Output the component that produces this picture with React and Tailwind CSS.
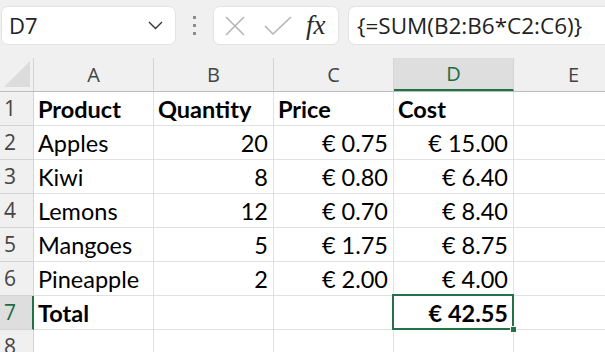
import React from "react";

const cellFont = { fontFamily: "Lato, 'Open Sans', sans-serif" };
const uiFont = { fontFamily: "'Open Sans', 'Noto Sans', sans-serif" };

const rows = [
  ["Product", "Quantity", "Price", "Cost"],
  ["Apples", "20", "€ 0.75", "€ 15.00"],
  ["Kiwi", "8", "€ 0.80", "€ 6.40"],
  ["Lemons", "12", "€ 0.70", "€ 8.40"],
  ["Mangoes", "5", "€ 1.75", "€ 8.75"],
  ["Pineapple", "2", "€ 2.00", "€ 4.00"],
  ["Total", "", "", "€ 42.55"],
  ["", "", "", ""],
];

const cols = ["A", "B", "C", "D", "E"];

function Toolbar() {
  return (
    <div className="flex h-[58px] items-start gap-0 bg-[#f0f0f0] pt-[6px]" style={uiFont}>
      {/* name box */}
      <div className="ml-px flex h-[39px] w-[175px] items-center justify-between rounded-[7px] border border-[#e3e3e3] bg-white pl-[7px] pr-[12px]">
        <span className="text-[22px] text-[#222]">D7</span>
        <svg width="15" height="9" viewBox="0 0 15 9" fill="none">
          <path d="M1 1l6.5 6.5L14 1" stroke="#333" strokeWidth="1.4" />
        </svg>
      </div>
      {/* dots */}
      <div className="ml-[17px] mt-[10px] flex w-[4px] flex-col gap-[5px]">
        <span className="h-[3px] w-[3px] bg-[#8c8c8c]" />
        <span className="h-[3px] w-[3px] bg-[#8c8c8c]" />
        <span className="h-[3px] w-[3px] bg-[#8c8c8c]" />
      </div>
      {/* cancel / enter / fx */}
      <div className="ml-[16px] flex h-[39px] w-[126px] items-center rounded-[7px] border border-[#e3e3e3] bg-white pl-[10px]">
        <svg width="22" height="22" viewBox="0 0 22 22" fill="none">
          <path d="M2 2l18 18M20 2L2 20" stroke="#b4b4b4" strokeWidth="1.6" />
        </svg>
        <svg className="ml-[18px]" width="28" height="20" viewBox="0 0 28 20" fill="none">
          <path d="M1 10l8 8L27 1" stroke="#b4b4b4" strokeWidth="1.6" />
        </svg>
        <span
          className="ml-[14px] text-[27px] italic leading-none text-[#2a2a2a]"
          style={{ fontFamily: "'Liberation Serif', 'DejaVu Serif', serif" }}
        >
          fx
        </span>
      </div>
      {/* formula */}
      <div className="ml-[9px] flex h-[39px] flex-1 items-center rounded-l-[7px] border border-r-0 border-[#e3e3e3] bg-white pl-[8px]">
        <span className="whitespace-nowrap text-[22.5px] text-[#222]">{"{=SUM(B2:B6*C2:C6)}"}</span>
      </div>
    </div>
  );
}

export default function App() {
  return (
    <div className="h-[352px] w-[605px] overflow-hidden bg-white">
      <Toolbar />
      {/* column header row */}
      <div className="flex h-[34px] border-b border-[#bdbdbd] bg-[#f0f0f0]" style={uiFont}>
        <div className="flex w-[34px] shrink-0 items-end justify-end border-r border-[#d4d4d4] pb-[4px] pr-[3px]">
          <svg width="26" height="26" viewBox="0 0 26 26">
            <path d="M26 0V26H0Z" fill="#dcdcdc" />
          </svg>
        </div>
        {cols.map((c) => (
          <div
            key={c}
            className={`flex w-[120px] shrink-0 items-center justify-center border-r text-[20px] ${
              c === "D"
                ? "border-[#d4d4d4] border-b-2 border-b-[#217346] bg-[#dedede] text-[#1e6b41]"
                : "border-[#d4d4d4] text-[#444]"
            }`}
          >
            {c}
          </div>
        ))}
      </div>
      {rows.map((r, i) => (
        <div key={i} className="flex h-[34px]">
          <div
            className={`flex w-[34px] shrink-0 items-center border-b pl-[4px] text-[21px] ${
              i === 6
                ? "border-r-2 border-b-[#d4d4d4] border-r-[#217346] bg-[#dedede] text-[#1e6b41]"
                : "border-r border-[#d4d4d4] bg-[#f0f0f0] text-[#444]"
            }`}
            style={uiFont}
          >
            {i + 1}
          </div>
          {[0, 1, 2, 3, 4].map((j) => {
            const v = j < 4 ? r[j] : "";
            const bold = i === 0 || (i === 6 && (j === 0 || j === 3));
            const right = j > 0 && i > 0;
            return (
              <div
                key={j}
                className={`relative flex w-[120px] shrink-0 items-center border-b border-r border-[#e1e1e1] px-[4px] pt-[2px] text-[23.5px] text-black ${
                  right ? "justify-end pr-[5px]" : ""
                } ${bold ? "font-bold" : ""}`}
                style={cellFont}
              >
                {v}
                {i === 6 && j === 3 && (
                  <>
                    <div className="absolute -left-[2px] -top-[2px] bottom-[-1px] right-[-1px] z-10 border-2 border-[#217346]" />
                    <div className="absolute -bottom-[4px] -right-[4px] z-20 h-[7px] w-[7px] border border-white bg-[#217346]" />
                  </>
                )}
              </div>
            );
          })}
        </div>
      ))}
    </div>
  );
}
